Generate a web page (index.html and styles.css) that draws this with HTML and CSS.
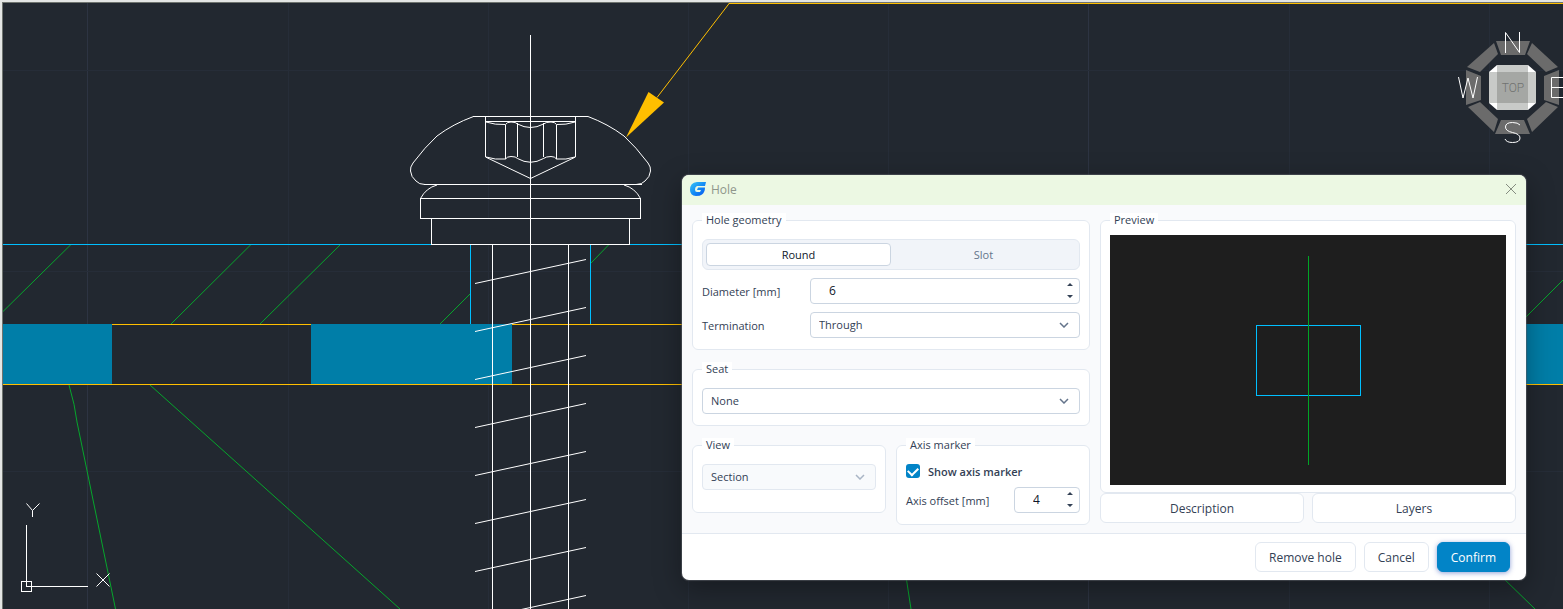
FILE: index.html
```html
<!DOCTYPE html>
<html lang="en">
<head>
<meta charset="utf-8">
<title>Hole</title>
<link rel="stylesheet" href="styles.css">
</head>
<body>
<main class="workspace">
<svg class="drawing" width="100%" height="100%" aria-hidden="true">
  <g class="grid" shape-rendering="crispEdges">
    <g class="grid-major">
      <path d="M87.5 0V2000M1088.5 0V2000"/>
    </g>
    <path d="M288.5 0V2000M488.5 0V2000M688.5 0V2000M888.5 0V2000M1289.5 0V2000M1489.5 0V2000M0 70.5H4000M0 271.5H4000M0 471.5H4000"/>
  </g>
  <path class="edge" shape-rendering="crispEdges" d="M2.500 2000V2.500H4000"/>
  <g class="hatch">
    <path d="M3 311.500L71 244.500M171 324L251 244.500M260 324L340.500 244.500M440 324L470.500 293.500M591 263L609 244.500M1526 317L1563 280"/>
    <path d="M69 385Q75 405 77 422L115.500 609M150 385L400 609M905 570L911 609M1500 575L1535 609"/>
  </g>
  <g shape-rendering="crispEdges">
    <path class="cyan" d="M3 244.500H4000M470.500 245V324M590.500 245V324"/>
    <path class="slab" d="M3 324H112V384H3ZM311 324H512V384H311ZM1520 324H4000V384H1520Z"/>
    <path class="amber" d="M112 324.500H311M512 324.500H1520M3 384.500H4000M729 3.500H4000"/>
  </g>
  <path class="amber" d="M657 97.500L729.500 3"/>
  <path class="arrow" d="M626 137.500L648.500 92L664 102.500Z"/>
  <g class="screw">
    <path class="mask" d="M432 218H629V244H432Z"/>
    <path shape-rendering="crispEdges" d="M530.500 35V609M473 116.500H588M485.500 117V157M575.500 117V157M485 121.500H576M424 184.500H642M420.500 198.500H640.500V218.500H420.500ZM431.500 218V244.500H629.500V218M492.500 245V609M568.500 245V609M505.500 125V159M517.500 123V157M543.500 123V157M556.500 125V159"/>
    <path d="M473.500 116.500Q453 124 437 136Q425 147 413 163Q410 167 410.500 171Q411 177 416 181Q419 184.500 425 184.500M588 116.500Q608 124 624 136Q636 147 648 163Q651 167 650.500 171Q650 177 645 181Q642 184.500 636 184.500M437 185Q426 188 420.500 198.500M624 185Q635 188 640.500 198.500"/>
    <path d="M486 122Q495 125 505.500 124.500Q507 122 511 122Q516 122 517.500 124Q530.500 131 543.500 124Q546 122 551 122Q555 122 556.500 124.500Q566 125 575 122M486 157Q495 160 505.500 159Q507 156.500 511 156.500Q516 156.500 517.500 158.500Q530.500 166 543.500 158.500Q546 156.500 551 156.500Q555 156.500 556.500 159Q566 160 575 157M485.500 157L530.500 178.500L575.500 157"/>
    <path d="M475 283.500L586 259.500M475 331.500L586 307.500M475 379.500L586 355.500M475 427.500L586 403.500M475 475.500L586 451.500M475 523.500L586 499.500M475 571.500L586 547.500M475 619.500L586 595.500"/>
  </g>
  <g class="screw">
    <path shape-rendering="crispEdges" d="M26.500 525V586.500H88M21.500 581.500H31.500V591.500H21.500Z"/>
    <path d="M26.500 503.500L32.500 510.500L39.500 503.500M32.500 510.500V517M96.500 573.500L109.500 586.500M96.500 586.500L109.500 573.500"/>
  </g>
</svg>

<svg class="compass" width="105" height="120" viewBox="0 0 105 120" role="img" aria-label="View compass: top">
  <g fill="#6b6b6b">
    <path d="M38 11H72L67 25H43ZM36 13L9 37L22 42L40 24ZM74 13L100 37L88 42L69 24ZM8 40L23 46V70L8 75ZM101 40L86 46V70L101 75ZM10 77L22 72L40 89L36 102ZM100 77L88 72L69 89L74 102ZM43 90H66L72 104H37Z"/>
  </g>
  <path fill="#fff" d="M39 35H70L78 42V73L70 80H39L31 73V42Z"/>
  <path fill="#c8cac8" d="M39 35H70V42H78V73H70V80H39V73H31V42H39Z"/>
  <path fill="#a5a7a4" d="M39 42H70V73H39Z"/>
  <text class="compass-face" x="55" y="62">TOP</text>
  <g fill="none" stroke="#fff">
    <path d="M47.500 23V2.500L61.500 22.500V2"/>
    <path d="M0.500 47L5 68L10 48L15 68L19.500 47"/>
    <path d="M105 47.500H93.500V67.500H105M94 57.500H105"/>
    <path d="M62 95Q60 92.500 54.500 92.500Q47.500 92.500 47.500 97Q47.500 101 54.500 102.500Q62 104 62 108Q62 112.500 54.500 112.500Q48.500 112.500 47 109"/>
  </g>
</svg>

<section class="dialog" role="dialog" aria-labelledby="dialog-title">
  <header class="titlebar">
    <svg width="16" height="16" viewBox="0 0 16 16" aria-hidden="true">
      <defs><linearGradient id="brand" x1="0" x2="1" y1="0" y2="1"><stop offset="0" stop-color="#39c5f5"/><stop offset=".55" stop-color="#1187f5"/><stop offset="1" stop-color="#0750ee"/></linearGradient></defs>
      <path fill="url(#brand)" d="M16 1L15 5H7Q5 5.500 5 8.500Q5 11 7 11H10L11 9H7L8 6.500H15Q15 11 12 13.500Q10 15 6 15Q0 14.500 0 9Q0 1.500 7 1Z"/>
    </svg>
    <h1 class="title" id="dialog-title">Hole</h1>
    <button class="close" type="button" aria-label="Close"><svg width="12" height="12" viewBox="0 0 12 12"><path d="M1 1L11 11M11 1L1 11"/></svg></button>
  </header>

  <form class="content">
    <div class="column">
      <fieldset class="group">
        <legend>Hole geometry</legend>
        <div class="segmented">
          <button class="segment selected" type="button" aria-pressed="true">Round</button>
          <button class="segment" type="button" aria-pressed="false">Slot</button>
        </div>
        <div class="row">
          <label for="diameter">Diameter [mm]</label>
          <div class="field spin"><input id="diameter" type="text" inputmode="decimal" value="6"><svg class="steps" width="6" height="16" viewBox="0 0 6 16"><path d="M0 3L3 0L6 3ZM0 12L3 15L6 12Z"/></svg></div>
        </div>
        <div class="row">
          <label for="termination">Termination</label>
          <div class="field"><select id="termination"><option>Through</option></select><svg class="chevron" width="10" height="6" viewBox="0 0 10 6"><path d="M1 1L5 5L9 1"/></svg></div>
        </div>
      </fieldset>
      <fieldset class="group">
        <legend>Seat</legend>
        <div class="field"><select aria-label="Seat"><option>None</option></select><svg class="chevron" width="10" height="6" viewBox="0 0 10 6"><path d="M1 1L5 5L9 1"/></svg></div>
      </fieldset>
      <div class="pair">
        <fieldset class="group view-group">
          <legend>View</legend>
          <div class="field disabled"><select aria-label="View" disabled><option>Section</option></select><svg class="chevron" width="10" height="6" viewBox="0 0 10 6"><path d="M1 1L5 5L9 1"/></svg></div>
        </fieldset>
        <fieldset class="group">
          <legend>Axis marker</legend>
          <label class="check"><input type="checkbox" checked><span>Show axis marker</span></label>
          <div class="row offset-row">
            <label for="offset">Axis offset [mm]</label>
            <div class="field spin"><input id="offset" type="text" inputmode="decimal" value="4"><svg class="steps" width="6" height="16" viewBox="0 0 6 16"><path d="M0 3L3 0L6 3ZM0 12L3 15L6 12Z"/></svg></div>
          </div>
        </fieldset>
      </div>
    </div>
    <div class="column preview-column">
      <fieldset class="group preview">
        <legend>Preview</legend>
        <svg class="preview-canvas" viewBox="0 0 396 250" role="img" aria-label="Hole preview">
          <g fill="none" shape-rendering="crispEdges"><path stroke="#00bfff" d="M146.500 90.500H250.500V160.500H146.500Z"/><path stroke="#00a526" d="M198.500 21V230"/></g>
        </svg>
      </fieldset>
      <div class="preview-actions">
        <button class="button" type="button">Description</button>
        <button class="button" type="button">Layers</button>
      </div>
    </div>
  </form>

  <footer class="footer">
    <button class="button" type="button">Remove hole</button>
    <button class="button" type="button">Cancel</button>
    <button class="button primary" type="button">Confirm</button>
  </footer>
</section>
</main>
</body>
</html>
```
FILE: styles.css
```css
* { box-sizing: border-box; }

body {
  margin: 0;
  background: #222830;
  color: #334155;
  font: 11px/16px "Open Sans", "Noto Sans", sans-serif;
}

.workspace {
  position: relative;
  height: 100vh;
  overflow: hidden;
  border-top: 2px solid #e4e6e4;
  border-left: 2px solid #e4e6e4;
}

.drawing { position: absolute; top: -2px; left: -2px; width: calc(100% + 2px); height: calc(100% + 2px); }
.grid path { stroke: #262d38; }
.grid-major path { stroke: #2d3442; }
.edge { fill: none; stroke: #6f746f; }
.hatch path { fill: none; stroke: #06a62c; }
.cyan { stroke: #00bfff; }
.slab { fill: #007ea8; }
.amber { stroke: #ffbf00; fill: none; }
.arrow { fill: #ffbf00; }
.screw path { fill: none; stroke: #fff; }
.screw .mask { fill: #222830; stroke: none; }

.compass { position: absolute; top: 28px; right: 0; }
.compass-face { fill: #707270; font: 300 12px Roboto, sans-serif; text-anchor: middle; }

.dialog {
  position: absolute;
  top: 173px;
  left: 680px;
  width: 844px;
  overflow: hidden;
  border-radius: 7px;
  background: #fff;
  box-shadow: 0 0 1px 1px rgba(90, 94, 100, .6), 0 8px 28px rgba(0, 0, 0, .35);
}

.titlebar {
  display: flex;
  align-items: center;
  gap: 5px;
  height: 30px;
  padding: 0 9px 2px 8px;
  background: #ecf8e3;
}
.title { margin: 0; color: #8f968b; font-size: 12px; line-height: 16px; padding-top: 2px; font-weight: 400; }
.close { display: flex; margin-left: auto; padding: 0; border: 0; background: none; }
.close path { stroke: #858c80; fill: none; }

.content {
  display: grid;
  grid-template-columns: 398fr 416fr;
  gap: 10px;
  padding: 8px 10px;
  background: #f9fafc;
  border-bottom: 1px solid #e2e8f0;
}
.column { display: flex; flex-direction: column; gap: 12px; min-width: 0; }
.preview-column { gap: 0; }

.group {
  display: flex;
  flex-direction: column;
  gap: 8px;
  min-width: 0;
  margin: 0;
  padding: 11px 9px;
  border: 1px solid #e2e8f0;
  border-radius: 6px;
  background: #fff;
}
legend { height: 15px; padding: 0 4px; background: #fff; line-height: 14px; }

.segmented {
  display: grid;
  grid-template-columns: 1fr 1fr;
  padding: 3px;
  border: 1px solid #e2e8f0;
  border-radius: 6px;
  background: #f1f4f9;
}
.segment { height: 23px; padding: 0; border: 1px solid transparent; border-radius: 4px; background: none; color: #64748b; font: inherit; }
.segment.selected { border-color: #cbd5e1; background: #fff; color: #0f172a; }

.row { display: grid; grid-template-columns: 100px 1fr; gap: 8px; align-items: center; }
.row > label { padding-top: 2px; }
.offset-row { grid-template-columns: 1fr 66px; }

.field { position: relative; }
.field input, .field select {
  display: block;
  width: 100%;
  height: 26px;
  padding: 0 8px;
  border: 1px solid #cbd5e1;
  border-radius: 4px;
  background: #fff;
  color: #334155;
  font: inherit;
  appearance: none;
}
.field.spin input { padding: 0 18px 2px; color: #0f172a; font-size: 12px; }
.field.disabled select { border-color: #e2e8f0; background: #f8fafc; opacity: 1; }
.chevron { position: absolute; top: 10px; right: 11px; fill: none; stroke: #64748b; stroke-width: 1.5; pointer-events: none; }
.disabled .chevron { stroke: #a9b5c5; }
.steps { position: absolute; top: 5px; right: 7px; fill: #334155; pointer-events: none; }

.pair { display: grid; grid-template-columns: 1fr 1fr; gap: 10px; align-items: start; }
.view-group { min-height: 75px; }
.check { display: flex; align-items: flex-start; gap: 8px; height: 15px; font-weight: 600; }
.check input { display: grid; place-items: center; width: 14px; height: 14px; margin: 0; border-radius: 3px; background: #0284c7; appearance: none; }
.check input::before { content: ""; width: 8px; height: 5px; border: solid #fff; border-width: 0 0 2px 2px; transform: translateY(-1px) rotate(-45deg); }

.preview { padding: 7px 9px; }
.preview-canvas { display: block; width: 100%; background: #1e1e1e; }
.preview-actions { display: grid; grid-template-columns: 1fr 1fr; gap: 8px; }

.button { height: 30px; padding: 1px 13px 0; border: 1px solid #e2e8f0; border-radius: 6px; background: #fff; color: #334155; font: inherit; font-size: 12px; }
.footer { display: flex; justify-content: flex-end; gap: 8px; padding: 8px 16px; }
.button.primary { border-color: #0284c7; background: #0284c7; color: #fff; box-shadow: 0 1px 5px rgba(30, 64, 175, .5); }
```
